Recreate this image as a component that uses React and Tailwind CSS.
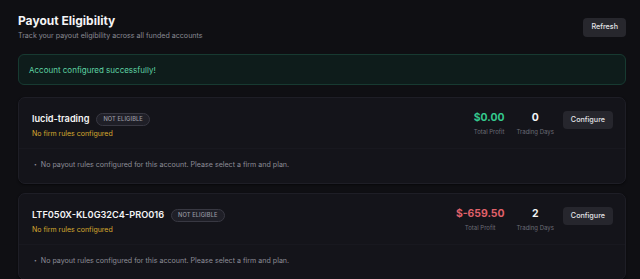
const ACCOUNTS = [
  { name: 'lucid-trading', profit: '$0.00', positive: true, days: 0 },
  { name: 'LTF050X-KL0G32C4-PRO016', profit: '$-659.50', positive: false, days: 2 },
];

function AccountCard({ account }) {
  return (
    <div className="rounded-[7px] border border-[#1e1e26] bg-[#14141a] shadow-[0_1px_2px_rgba(0,0,0,0.5)]">
      <div className="flex items-start justify-between pl-[13px] pr-[12px] pt-[13px] pb-[8px]">
        <div>
          <div className="flex h-[16px] items-center gap-[7px]">
            <span className="text-[9.2px] font-semibold leading-[16px] text-[#f4f4f5]">{account.name}</span>
            <span className="flex h-[13px] items-center rounded-full border border-[#383842] bg-[#1f1f27] px-[6px] text-[5.7px] font-medium uppercase tracking-[0.02em] text-[#9a9aa5]">
              Not Eligible
            </span>
          </div>
          <div className="mt-[1px] text-[7px] leading-[12px] text-[#d6a92f]">No firm rules configured</div>
        </div>
        <div className="flex items-start gap-3">
          <div className="text-center">
            <div
              className={
                account.positive
                  ? 'text-[10.4px] font-bold leading-[14px] text-[#34c98e]'
                  : 'text-[10.4px] font-bold leading-[14px] text-[#e0616a]'
              }
            >
              {account.profit}
            </div>
            <div className="mt-[2px] text-[6px] leading-[9px] text-[#6b6b76]">Total Profit</div>
          </div>
          <div className="text-center">
            <div className="text-[10.4px] font-bold leading-[14px] text-[#f4f4f5]">{account.days}</div>
            <div className="mt-[2px] text-[6px] leading-[9px] text-[#6b6b76]">Trading Days</div>
          </div>
          <button className="ml-[-3px] h-[18px] rounded-[4px] bg-[#26262d] px-[8px] text-[7.2px] font-medium text-[#e4e4e7]">
            Configure
          </button>
        </div>
      </div>
      <div className="border-t border-[#18181f] pl-[14px] pr-[12px] pt-[10px] pb-[13px]">
        <div className="flex items-center gap-[4px] text-[7.1px] leading-[11px] text-[#8d8d98]">
          <span className="pl-[1px] text-[5px]">•</span>
          <span>No payout rules configured for this account. Please select a firm and plan.</span>
        </div>
      </div>
    </div>
  );
}

export default function App() {
  return (
    <div className="min-h-screen bg-[#0f0f13] pl-[18px] pr-[14px] pt-[12px] font-['Inter',sans-serif]">
      <div className="flex items-center justify-between">
        <div>
          <h1 className="text-[12px] font-bold leading-[18px] text-[#f4f4f5]">Payout Eligibility</h1>
          <p className="text-[7.1px] leading-[12px] text-[#8a8a94]">Track your payout eligibility across all funded accounts</p>
        </div>
        <button className="h-[19px] rounded-[4px] bg-[#27272d] px-[8px] text-[7.2px] font-medium text-[#e4e4e7]">
          Refresh
        </button>
      </div>

      <div className="mt-[12px] flex h-[31px] items-center rounded-[6px] border border-[#173a31] bg-[#0e1c1b] px-[10px] text-[8px] text-[#5fd4a4]">
        Account configured successfully!
      </div>

      <div className="mt-[12px] flex flex-col gap-[9px]">
        {ACCOUNTS.map((a) => (
          <AccountCard key={a.name} account={a} />
        ))}
      </div>
    </div>
  );
}
